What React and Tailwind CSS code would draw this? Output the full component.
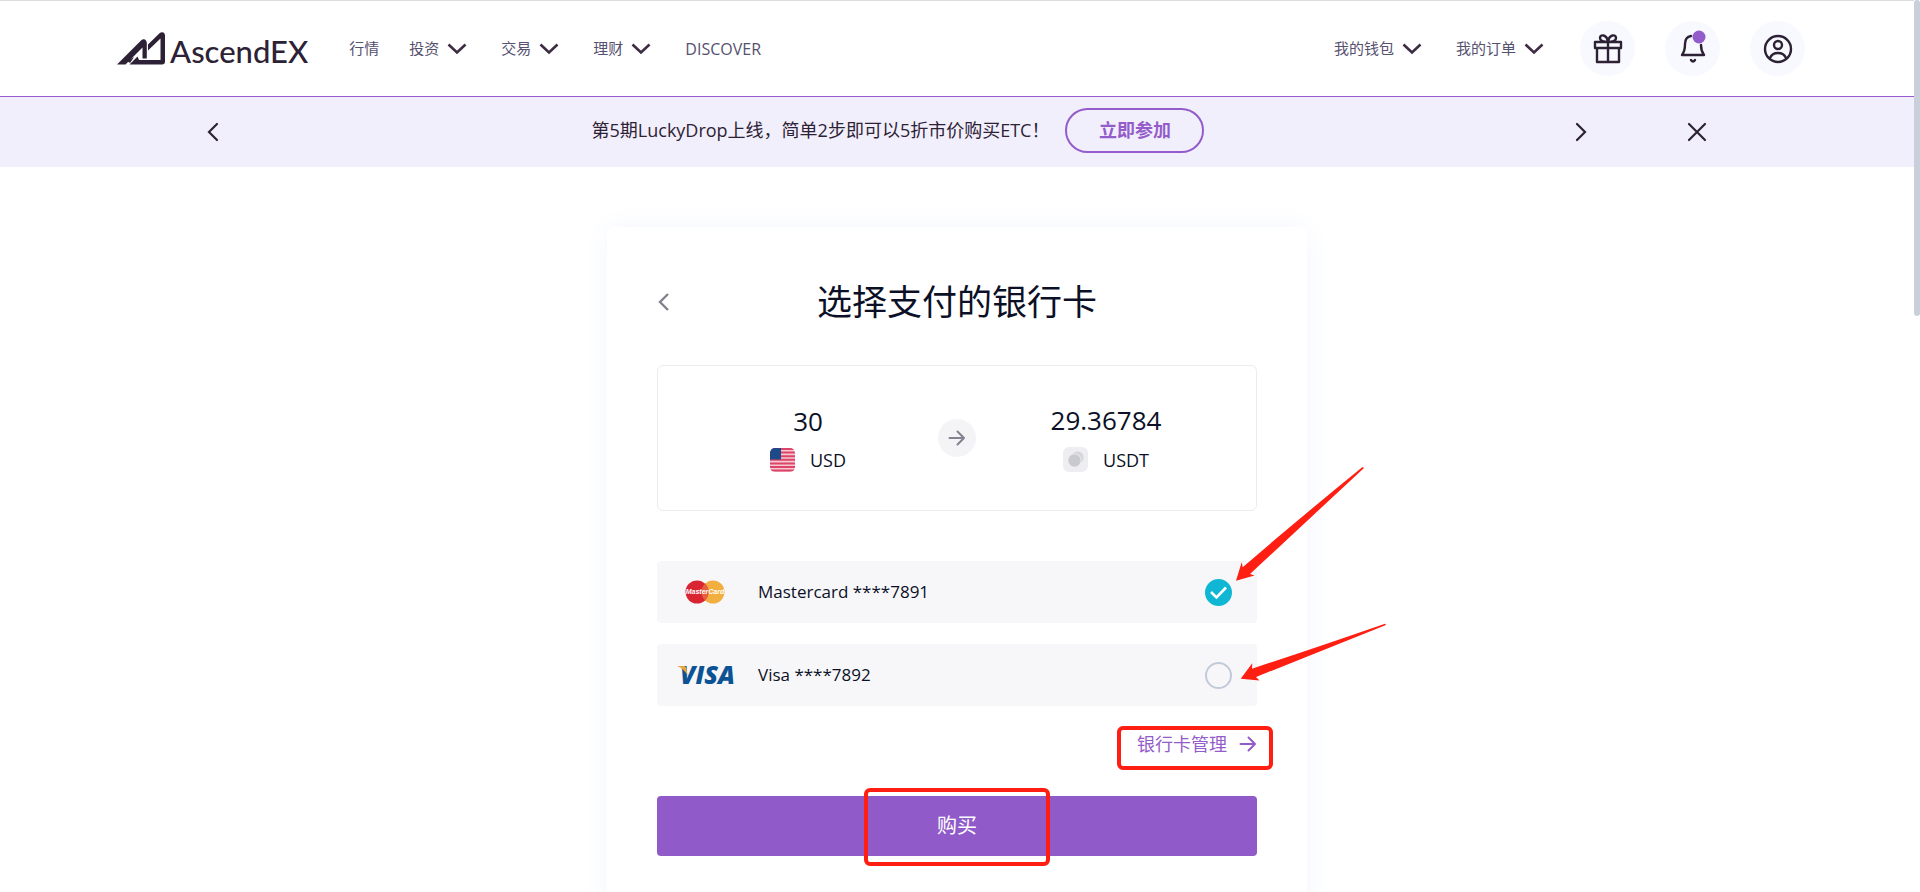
import React, { useState } from 'react';

const navItems = [
  { label: '行情' },
  { label: '投资', menu: true },
  { label: '交易', menu: true },
  { label: '理财', menu: true },
  { label: 'DISCOVER', className: 'text-base' },
];

const cards = [
  { id: 'mastercard', label: 'Mastercard ****7891', Logo: MastercardLogo },
  { id: 'visa', label: 'Visa ****7892', Logo: VisaLogo },
];

function Logo() {
  return (
    <span className="flex items-end text-[#2d2235]">
      <svg width="48" height="33" viewBox="0 0 48 33" fill="none" className="shrink-0">
        <path fill="currentColor" d="M0 32.500 L24 8.500 Q26 6.500 28 7.500 Q29.800 8.500 29.800 11 V26.500 H25.500 V15.500 L8.500 32.500 Z" />
        <path fill="currentColor" d="M12.500 32.500 L20.500 24.500 L22 28 H43.500 V6.500 L31 18.500 V12.500 L42.500 1.200 Q44.500 -0.500 46.500 0.500 Q48 1.500 48 3.500 V29.500 Q48 32.500 45 32.500 Z" />
        <path fill="currentColor" d="M10 29 L17 25 L13 31 Z" />
      </svg>
      <span className="ml-[5px] font-['Lato','Noto_Sans_CJK_SC',sans-serif] text-[31px] leading-7 font-medium">AscendEX</span>
    </span>
  );
}

function Chevron() {
  return (
    <svg width="20" height="12" viewBox="0 0 20 12" fill="none" stroke="#3d2c42" strokeWidth="2.600">
      <path d="M1.500 1.500 L10 9.500 L18.500 1.500" />
    </svg>
  );
}

function NavLink({ label, menu, className = '' }) {
  return (
    <a href="#" className={`flex items-center gap-2 ${menu ? 'pr-1' : ''} ${className}`}>
      {label}
      {menu && <Chevron />}
    </a>
  );
}

function IconButton({ label, children }) {
  return (
    <button aria-label={label} className="flex size-[55px] items-center justify-center rounded-full bg-[#f8f9fe]">
      <svg width="30" height="30" viewBox="0 0 30 30" fill="none" stroke="#2d2235" strokeWidth="2.400" strokeLinecap="round" strokeLinejoin="round" className="overflow-visible">
        {children}
      </svg>
    </button>
  );
}

function Arrow() {
  return (
    <svg width="18" height="18" viewBox="0 0 18 18" fill="none" stroke="currentColor" strokeWidth="2" strokeLinecap="round" strokeLinejoin="round">
      <path d="M1.500 9 H16 M9.500 2.500 L16 9 L9.500 15.500" />
    </svg>
  );
}

function UsFlag() {
  return (
    <svg width="25" height="24" viewBox="0 0 25 24">
      <clipPath id="flag">
        <rect width="25" height="24" rx="5" />
      </clipPath>
      <g clipPath="url(#flag)">
        <rect width="25" height="24" fill="#f7c9d3" />
        <path stroke="#dc4468" strokeWidth="2" d="M0 1 H25 M0 4.600 H25 M0 8.200 H25 M0 11.800 H25 M0 15.400 H25 M0 19 H25 M0 22.600 H25" />
        <rect width="11" height="11.500" fill="#1f4a8a" />
      </g>
    </svg>
  );
}

function CoinIcon() {
  return (
    <svg width="25" height="25" viewBox="0 0 25 25">
      <rect width="25" height="25" rx="6" fill="#eeeef1" />
      <circle cx="14.500" cy="10.500" r="6" fill="#d5d5da" />
      <circle cx="11.500" cy="13.500" r="7" fill="#eeeef1" />
      <circle cx="11.500" cy="13.500" r="6.200" fill="#c9c9d0" />
    </svg>
  );
}

function MastercardLogo() {
  return (
    <svg width="40" height="24" viewBox="0 0 40 24">
      <circle cx="28" cy="12" r="11.500" fill="#f3ae40" />
      <circle cx="12" cy="12" r="11.500" fill="#d92532" />
      <path fill="#e8603a" d="M20 3.700 A11.500 11.500 0 0 1 20 20.300 A11.500 11.500 0 0 1 20 3.700" />
      <text x="20" y="14" textAnchor="middle" fill="#fff" className="font-['Liberation_Sans',sans-serif] text-[7px] font-bold italic">MasterCard</text>
    </svg>
  );
}

function VisaLogo() {
  return (
    <svg width="62" height="40" viewBox="0 0 62 40" className="shrink-0">
      <text x="6" y="29" fill="#0b5394" className="font-['Open_Sans',sans-serif] text-[25px] font-extrabold italic">VISA</text>
      <path fill="#eba33a" d="M3 11 H10 Q12 11 12.500 14 L13.500 20 Q9 13 3 11 Z" />
    </svg>
  );
}

function Amount({ value, code, icon }) {
  return (
    <div className="flex w-[180px] flex-col items-center gap-[11px]">
      <span className="text-[26px] leading-8">{value}</span>
      <span className="flex items-center gap-[15px] text-[18px] leading-6">
        {icon}
        {code}
      </span>
    </div>
  );
}

function CardOption({ card, checked, onSelect }) {
  const { Logo: CardLogo } = card;
  return (
    <label className="relative flex h-[62px] cursor-pointer items-center rounded bg-[#f7f7f9] pr-[25px] pl-[19px]">
      <span className="flex w-[58px] justify-center">
        <CardLogo />
      </span>
      <span className="ml-6 text-[17px]">{card.label}</span>
      <input type="radio" name="card" checked={checked} onChange={onSelect} className="peer ml-auto size-[27px] appearance-none rounded-full border-2 border-[#c2cad9] checked:border-[#10b7d4] checked:bg-[#10b7d4]" />
      <svg width="27" height="27" viewBox="0 0 27 27" fill="none" stroke="#fff" strokeWidth="2.600" className="pointer-events-none absolute right-[25px] hidden peer-checked:block">
        <path d="M6 13 L11.500 18.500 L21 8.500" />
      </svg>
    </label>
  );
}

// Red arrows that point at the two radio buttons
function Pointers() {
  return (
    <svg width="160" height="230" viewBox="0 0 160 230" fill="#ff1e12" className="pointer-events-none absolute -top-[101px] left-[573px]">
      <path d="M132.500 7 L134 8 L20 114 L24.500 115.500 L6 120.700 L11.700 102.300 L12.700 107.300 Q65 62 132.500 7 Z" />
      <path d="M155 163.700 L156 165 L26 217 L29.500 220.500 L10.700 218.700 L22.300 203.300 L22 208.700 Q85 188 155 163.700 Z" />
    </svg>
  );
}

function Header() {
  return (
    <header className="flex h-[97px] items-center justify-between border-t border-b border-t-[#dcdcdc] border-b-[#9a5bcf] pr-[109px] pl-[117px] text-[15px] text-[#56516f]">
      <div className="flex items-center">
        <Logo />
        <nav className="ml-[41px] flex items-center gap-x-[30px]">
          {navItems.map((item) => (
            <NavLink key={item.label} {...item} />
          ))}
        </nav>
      </div>
      <div className="flex items-center">
        <nav className="flex items-center gap-[30px]">
          <NavLink label="我的钱包" menu />
          <NavLink label="我的订单" menu />
        </nav>
        <div className="ml-8 flex gap-[30px]">
          <IconButton label="礼物">
            <path d="M2 8 H28 V14 H2 Z M4 14 V28 H26 V14 M15 8 V28 M15 8 C11 8 7 7 7 4 C7 0 14 0 15 8 C16 0 23 0 23 4 C23 7 19 8 15 8" />
          </IconButton>
          <IconButton label="通知">
            <path d="M13 2 Q7 3 7 10 Q7 17 4 21 H26 Q23 17 23 11 M13 26 Q15 29 17 26" />
            <circle cx="21" cy="3" r="6.500" fill="#945cca" stroke="none" />
          </IconButton>
          <IconButton label="账户">
            <circle cx="15" cy="15" r="13" />
            <circle cx="15" cy="11" r="4" />
            <path d="M7 24 Q9 19 15 19 Q21 19 23 24" />
          </IconButton>
        </div>
      </div>
    </header>
  );
}

function Banner() {
  const icon = { width: 20, height: 20, viewBox: '0 0 20 20', fill: 'none', stroke: '#2d2235', strokeWidth: 2.2, strokeLinecap: 'round' };
  return (
    <section className="flex h-[70px] items-center bg-[#f1effb] pr-[207px] pl-[204px] text-[#2d2235]">
      <button aria-label="上一条">
        <svg {...icon}><path d="M13 2 L5 10 L13 18" /></svg>
      </button>
      <div className="flex flex-1 items-center justify-center gap-4 pb-1">
        <p className="text-[18px]">第5期LuckyDrop上线，简单2步即可以5折市价购买ETC！</p>
        <a href="#" className="flex h-[45px] w-[139px] items-center justify-center rounded-full border-2 border-[#945cca] text-[18px] font-bold text-[#945cca]">立即参加</a>
      </div>
      <button aria-label="下一条">
        <svg {...icon}><path d="M5 2 L13 10 L5 18" /></svg>
      </button>
      <button aria-label="关闭" className="ml-[95px]">
        <svg {...icon}><path d="M2 2 L18 18 M18 2 L2 18" /></svg>
      </button>
    </section>
  );
}

const App = () => {
  const [selected, setSelected] = useState('mastercard');

  return (
    <div className="flex h-screen overflow-hidden bg-white font-['Open_Sans','Noto_Sans_CJK_SC',sans-serif]">
      <div className="min-w-0 flex-1">
        <Header />
        <Banner />
        <main className="mx-auto mt-[60px] w-[700px] rounded-lg bg-white px-[50px] pt-12 pb-20 text-[#0b1026] shadow-[0_0_30px_#f4f6fd]">
          <div className="relative flex h-[54px] items-center justify-center">
            <button aria-label="返回" className="absolute left-0 text-[#83838f]">
              <svg width="14" height="18" viewBox="0 0 14 18" fill="none" stroke="currentColor" strokeWidth="2.400">
                <path d="M11 1 L3 9 L11 17" />
              </svg>
            </button>
            <h1 className="text-[35px]">选择支付的银行卡</h1>
          </div>

          <div className="mt-9 flex h-[146px] items-center justify-between rounded-md border border-[#ececef] px-[60px]">
            <Amount value="30" code="USD" icon={<UsFlag />} />
            <span className="flex size-[38px] items-center justify-center rounded-full bg-[#f4f4f7] text-[#83838f]">
              <Arrow />
            </span>
            <Amount value="29.36784" code="USDT" icon={<CoinIcon />} />
          </div>

          <div className="relative mt-[50px] flex flex-col gap-[21px]">
            {cards.map((card) => (
              <CardOption key={card.id} card={card} checked={selected === card.id} onSelect={() => setSelected(card.id)} />
            ))}
            <Pointers />
          </div>

          <div className="relative mt-6 flex justify-end">
            <a href="#" className="flex h-7 items-center gap-3 text-[18px] text-[#945cca]">
              银行卡管理
              <Arrow />
            </a>
            <span className="pointer-events-none absolute -top-1 -right-4 h-11 w-[156px] rounded-md border-4 border-[#ff1e12]" />
          </div>

          <div className="relative mt-[38px]">
            <button className="h-[60px] w-full rounded bg-[#905ac9] text-[20px] text-white">购买</button>
            <span className="pointer-events-none absolute -top-2 left-[207px] h-[78px] w-[186px] rounded-md border-4 border-[#ff1e12]" />
          </div>
        </main>
      </div>
      <div className="h-[316px] w-1.5 shrink-0 rounded-full bg-[#c9d0db]" />
    </div>
  );
};

export default App;
